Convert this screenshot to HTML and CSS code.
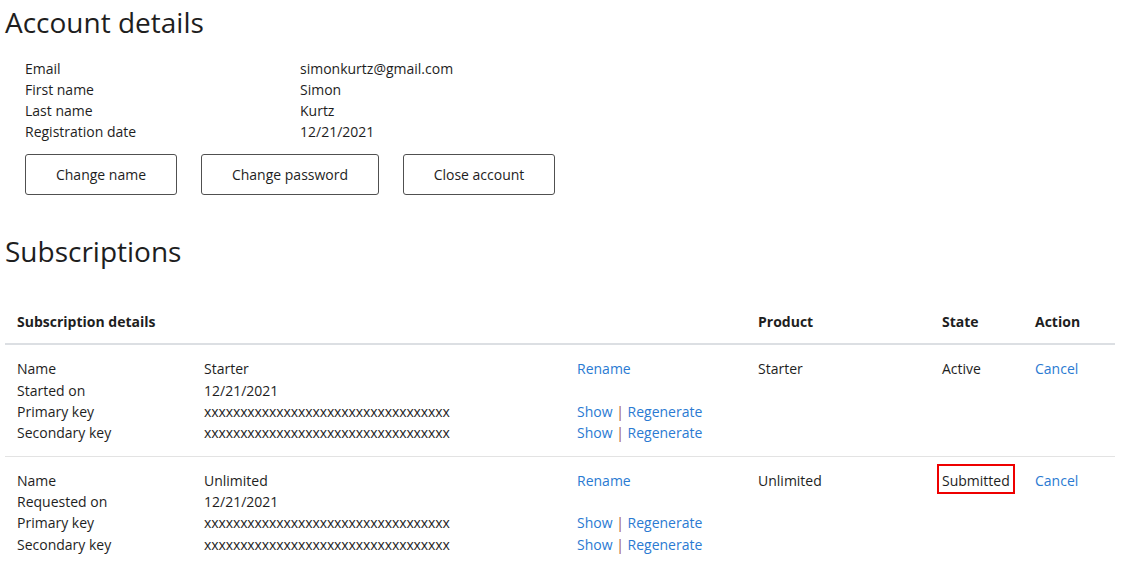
FILE: index.html
```html
<!DOCTYPE html>
<html>
<head>
<meta charset="utf-8">
<link rel="stylesheet" href="styles.css">
</head>
<body>
<main class="page">
  <h1 class="title">Account details</h1>
  <div class="account">
    <div class="details">
      <span>Email</span><span>simonkurtz@gmail.com</span>
      <span>First name</span><span>Simon</span>
      <span>Last name</span><span>Kurtz</span>
      <span>Registration date</span><span>12/21/2021</span>
    </div>
    <div class="buttons">
      <button class="btn btn-name">Change name</button>
      <button class="btn btn-pass">Change password</button>
      <button class="btn btn-name">Close account</button>
    </div>
  </div>

  <h1 class="title title-subs">Subscriptions</h1>
  <table class="subs">
    <colgroup>
      <col class="w-label"><col class="w-value"><col class="w-links"><col class="w-product"><col class="w-state"><col class="w-action">
    </colgroup>
    <thead>
      <tr>
        <th colspan="2">Subscription details</th>
        <th></th>
        <th>Product</th>
        <th class="th-state">State</th>
        <th>Action</th>
      </tr>
    </thead>
    <tbody>
      <tr>
        <td><div>Name</div><div>Started on</div><div>Primary key</div><div>Secondary key</div></td>
        <td><div>Starter</div><div>12/21/2021</div><div class="key">xxxxxxxxxxxxxxxxxxxxxxxxxxxxxxxxxx</div><div class="key">xxxxxxxxxxxxxxxxxxxxxxxxxxxxxxxxxx</div></td>
        <td><div><a>Rename</a></div><div>&nbsp;</div><div><a>Show</a> <span class="sep">|</span> <a>Regenerate</a></div><div><a>Show</a> <span class="sep">|</span> <a>Regenerate</a></div></td>
        <td>Starter</td>
        <td><span class="state">Active</span></td>
        <td><a>Cancel</a></td>
      </tr>
      <tr>
        <td><div>Name</div><div>Requested on</div><div>Primary key</div><div>Secondary key</div></td>
        <td><div>Unlimited</div><div>12/21/2021</div><div class="key">xxxxxxxxxxxxxxxxxxxxxxxxxxxxxxxxxx</div><div class="key">xxxxxxxxxxxxxxxxxxxxxxxxxxxxxxxxxx</div></td>
        <td><div><a>Rename</a></div><div>&nbsp;</div><div><a>Show</a> <span class="sep">|</span> <a>Regenerate</a></div><div><a>Show</a> <span class="sep">|</span> <a>Regenerate</a></div></td>
        <td>Unlimited</td>
        <td><span class="state state-marked">Submitted</span></td>
        <td><a>Cancel</a></td>
      </tr>
    </tbody>
  </table>
</main>
</body>
</html>
```

FILE: styles.css
```css
* { box-sizing: border-box; }
html, body { margin: 0; padding: 0; background: #fff; }
body {
  font-family: "Open Sans", "Noto Sans", sans-serif;
  font-size: 14px;
  line-height: 21px;
  color: #1e1e1e;
}
.page { padding: 0 18px 0 5px; }
.title {
  margin: 0;
  padding-top: 3px;
  font-size: 28px;
  line-height: 38px;
  font-weight: 400;
  color: #1e1e1e;
}
.account { padding: 17px 0 0 20px; }
.details {
  display: grid;
  grid-template-columns: 275px auto;
  width: max-content;
}
.buttons {
  display: flex;
  gap: 24px;
  margin-top: 12px;
}
.btn {
  height: 41px;
  border: 1px solid #505050;
  border-radius: 3px;
  background: #fff;
  font-family: inherit;
  font-size: 14px;
  color: #1e1e1e;
  padding: 0;
}
.btn-name { width: 152px; }
.btn-pass { width: 178px; }
.title-subs { margin-top: 34px; }

.subs {
  width: 1110px;
  table-layout: fixed;
  border-collapse: collapse;
  margin-top: 41px;
  line-height: 21.33px;
}
.w-label { width: 187px; }
.w-value { width: 373px; }
.w-links { width: 181px; }
.w-product { width: 179px; }
.w-state { width: 98px; }
.w-action { width: 92px; }
.subs th {
  text-align: left;
  font-weight: 700;
  padding: 0 12px 11px;
  border-bottom: 2px solid #dcdfe3;
  vertical-align: bottom;
  white-space: nowrap;
}
.subs th.th-state { padding-left: 17px; }
.subs td {
  vertical-align: top;
  padding: 13px 12px 12px;
  border-bottom: 1px solid #e3e3e3;
  white-space: nowrap;
}
.subs tbody tr:last-child td { border-bottom: none; }
.key { letter-spacing: -0.1px; }
.state {
  display: inline-block;
  vertical-align: top;
  margin-top: -6px;
  padding: 4px 3px 1px;
  border: 2px solid transparent;
}
.state-marked { border-color: #ee0000; }
a { color: #2a7ad2; text-decoration: none; }
.sep { color: #a0524a; }
```
